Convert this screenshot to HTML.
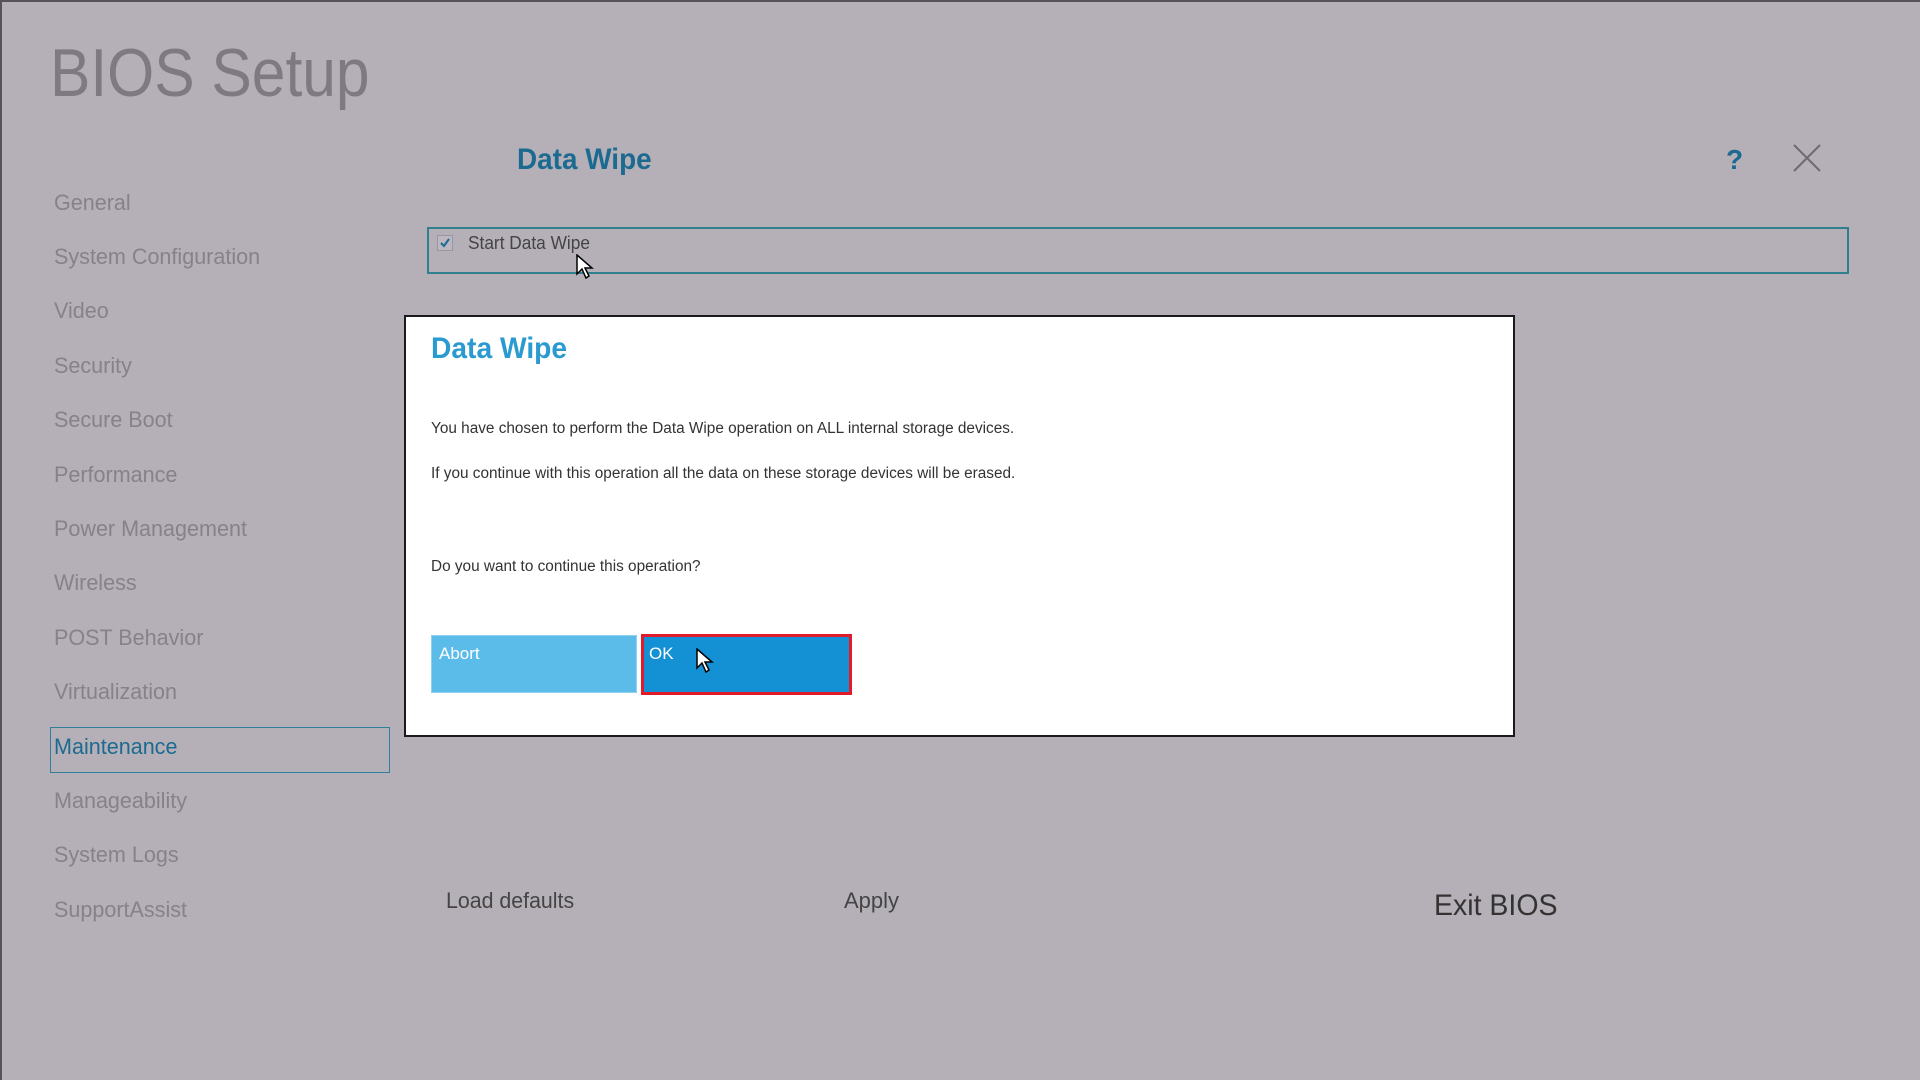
<!DOCTYPE html>
<html><head><meta charset="utf-8"><style>
html,body{margin:0;padding:0}
body{width:1920px;height:1080px;background:#b5b0b7;position:relative;overflow:hidden;font-family:"Liberation Sans",sans-serif;box-shadow:inset 2px 2px 0 #55525a}
.a{position:absolute;white-space:nowrap;transform-origin:left center}
.nav{position:absolute;left:54px;font-size:22px;color:#86818a;transform:translateY(-50%) scaleX(0.98);transform-origin:left center;white-space:nowrap}
.dt{color:#333;font-size:15.5px;left:431px;transform:translateY(-50%) scaleX(0.99)}
</style></head><body>
<div class="a" style="left:50px;top:34px;font-size:68px;color:#7f7a82;transform:scaleX(0.89)">BIOS Setup</div>
<div class="a" style="left:517px;top:143px;font-size:30px;font-weight:bold;color:#1d6a91;transform:scaleX(0.93)">Data Wipe</div>
<div class="a" style="left:1726px;top:144px;font-size:28px;font-weight:bold;color:#1d6a91">?</div>
<svg class="a" style="left:1792px;top:143px" width="30" height="30"><path d="M2 2L28 28M28 2L2 28" stroke="#6e6a72" stroke-width="2"/></svg>
<div class="a" style="left:427px;top:227px;width:1418px;height:43px;border:2px solid #2f7f8c"></div>
<div class="a" style="left:437px;top:235px;width:14px;height:14px;border:1px solid #9a95a0;background:#bcb7c0"></div>
<svg class="a" style="left:438px;top:236px" width="14" height="14"><path d="M3 7L6 10L11 3" stroke="#1d6a91" stroke-width="2" fill="none"/></svg>
<div class="a" style="left:468px;top:233px;font-size:18px;color:#444;transform:scaleX(0.96)">Start Data Wipe</div>
<div class="nav" style="top:203px">General</div>
<div class="nav" style="top:257px">System Configuration</div>
<div class="nav" style="top:311px">Video</div>
<div class="nav" style="top:366px">Security</div>
<div class="nav" style="top:420px">Secure Boot</div>
<div class="nav" style="top:475px">Performance</div>
<div class="nav" style="top:529px">Power Management</div>
<div class="nav" style="top:583px">Wireless</div>
<div class="nav" style="top:638px">POST Behavior</div>
<div class="nav" style="top:692px">Virtualization</div>
<div class="a" style="left:50px;top:727px;width:338px;height:44px;border:1px solid #2f7f9a"></div>
<div class="nav" style="top:747px;color:#1d6a91">Maintenance</div>
<div class="nav" style="top:801px">Manageability</div>
<div class="nav" style="top:855px">System Logs</div>
<div class="nav" style="top:910px">SupportAssist</div>
<div class="a" style="left:446px;top:888px;font-size:22px;color:#444;transform:scaleX(0.97)">Load defaults</div>
<div class="a" style="left:844px;top:888px;font-size:22px;color:#444">Apply</div>
<div class="a" style="left:1434px;top:889px;font-size:30px;color:#333;transform:scaleX(0.95)">Exit BIOS</div>
<div class="a" style="left:404px;top:315px;width:1107px;height:418px;background:#fff;border:2px solid #1a1a1a"></div>
<div class="a" style="left:431px;top:332px;font-size:30px;font-weight:bold;color:#2a9ad0;transform:scaleX(0.94)">Data Wipe</div>
<div class="a dt" style="top:429px">You have chosen to perform the Data Wipe operation on ALL internal storage devices.</div>
<div class="a dt" style="top:474px">If you continue with this operation all the data on these storage devices will be erased.</div>
<div class="a dt" style="top:567px">Do you want to continue this operation?</div>
<div class="a" style="left:431px;top:635px;width:206px;height:58px;background:#5bbbe9;border:1px solid #8fd0ee;box-sizing:border-box"></div>
<div class="a" style="left:439px;top:644px;font-size:17px;color:#fff">Abort</div>
<div class="a" style="left:641px;top:634px;width:211px;height:61px;background:#1490d4;border:3px solid #e21b2b;box-sizing:border-box"></div>
<div class="a" style="left:649px;top:644px;font-size:17px;color:#fff">OK</div>
<svg class="a" style="left:696px;top:648px" width="18" height="26"><path d="M1 1L1 20L6 15L10 24L13 22L9 14L16 14Z" fill="#fff" stroke="#000" stroke-width="1.5"/></svg>
<svg class="a" style="left:576px;top:254px" width="18" height="26"><path d="M1 1L1 20L6 15L10 24L13 22L9 14L16 14Z" fill="#fff" stroke="#000" stroke-width="1.5"/></svg>
</body></html>
